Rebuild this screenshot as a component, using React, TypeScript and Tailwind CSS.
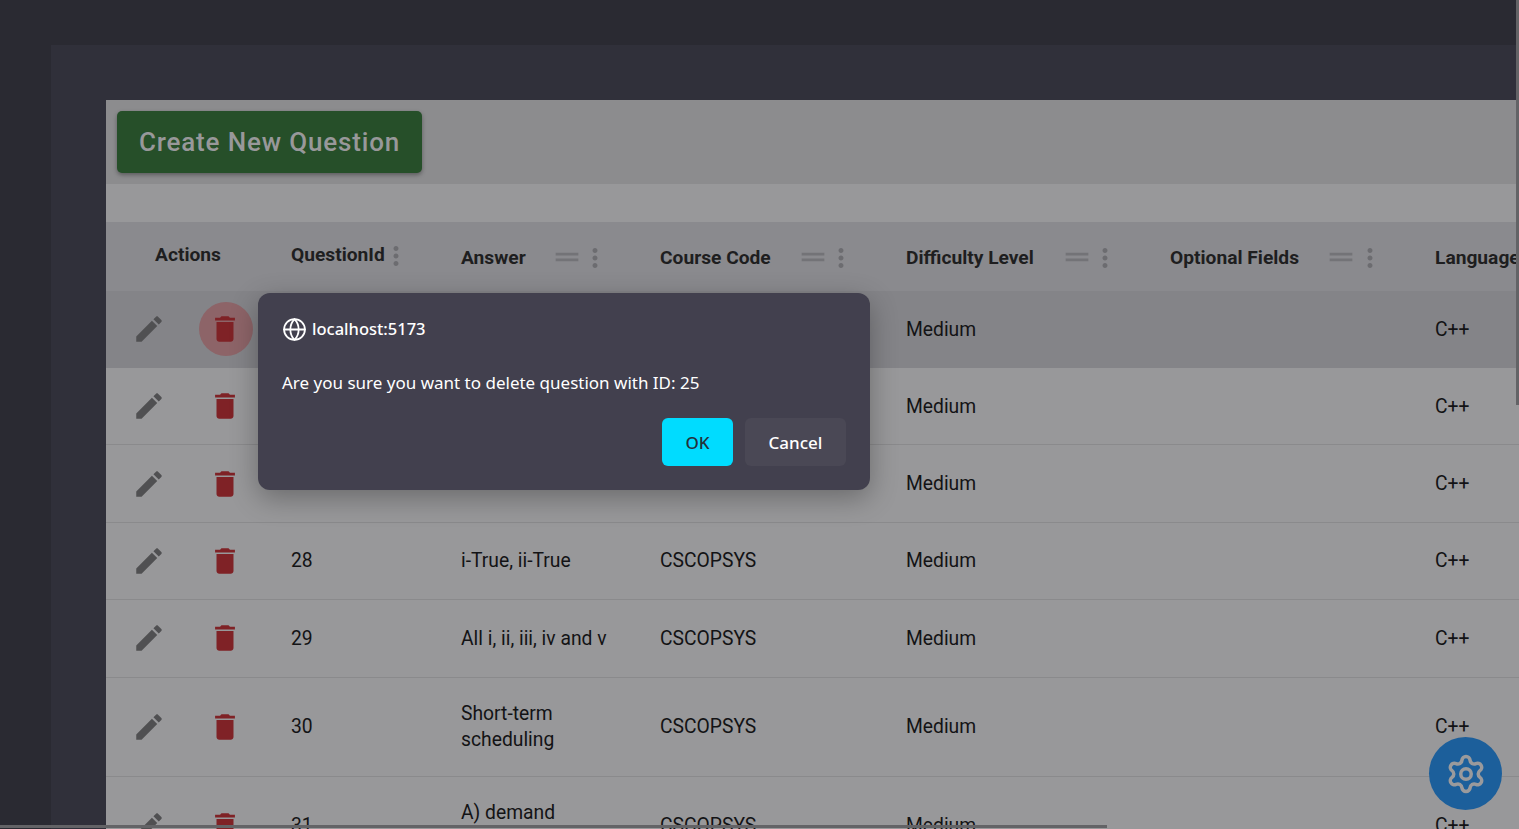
import React from "react";
import { Globe, Settings } from "lucide-react";

const COLS = "grid grid-cols-[185px_170px_199px_246px_264px_265px_200px]";

const ROWS = [
  { id: 25, answer: [], h: "h-[77.4px]", hover: true },
  { id: 26, answer: [], h: "h-[77.4px]" },
  { id: 27, answer: [], h: "h-[77.4px]" },
  { id: 28, answer: ["i-True, ii-True"], h: "h-[77.4px]" },
  { id: 29, answer: ["All i, ii, iii, iv and v"], h: "h-[77.4px]" },
  { id: 30, answer: ["Short-term", "scheduling"], h: "h-[99px]" },
  { id: 31, answer: ["A) demand", "paging"], h: "h-[99px]" },
];

function EditIcon() {
  return (
    <svg viewBox="0 0 24 24" className="w-[34px] h-[34px] fill-[#505052]">
      <path d="M3 17.25V21h3.75L17.81 9.94l-3.75-3.75L3 17.25zM20.71 7.04c.39-.39.39-1.02 0-1.41l-2.34-2.34c-.39-.39-1.02-.39-1.41 0l-1.83 1.83 3.75 3.75 1.83-1.83z" />
    </svg>
  );
}

function TrashIcon() {
  return (
    <svg viewBox="0 0 24 24" className="w-[34px] h-[34px] fill-[#7f2226]">
      <path d="M6 19c0 1.1.9 2 2 2h8c1.1 0 2-.9 2-2V7H6v12zM19 4h-3.5l-1-1h-5l-1 1H5v2h14V4z" />
    </svg>
  );
}

function Kebab() {
  return (
    <svg viewBox="0 0 24 24" className="w-[30px] h-[30px] shrink-0 fill-[#6c6c70]">
      <path d="M12 8c1.1 0 2-.9 2-2s-.9-2-2-2-2 .9-2 2 .9 2 2 2zm0 2c-1.1 0-2 .9-2 2s.9 2 2 2 2-.9 2-2-.9-2-2-2zm0 6c-1.1 0-2 .9-2 2s.9 2 2 2 2-.9 2-2-.9-2-2-2z" />
    </svg>
  );
}

function Handle() {
  return (
    <svg viewBox="0 0 24 24" className="w-[34px] h-[34px] shrink-0 fill-[#737377]">
      <path d="M20 9H4v2h16V9zM4 15h16v-2H4v2z" />
    </svg>
  );
}

function HeaderCell({ label, handleAt, kebabAt }: { label: string; handleAt: string; kebabAt: string }) {
  return (
    <div className="relative flex items-center pt-[5px]">
      <span className="text-[19.2px] font-bold whitespace-nowrap text-[#1e1e20]">{label}</span>
      <span className={`absolute top-[18px] ${handleAt}`}><Handle /></span>
      <span className={`absolute top-[21px] ${kebabAt}`}><Kebab /></span>
    </div>
  );
}

export default function App() {
  return (
    <div className="relative w-[1519px] h-[829px] overflow-hidden bg-[#2a2a32] font-['Roboto',sans-serif] pl-[51px] pt-[45px]">
      <div className="h-full bg-[#30303a] pl-[55px] pt-[55px]">
        <div className="h-full bg-[#98989a]">
          {/* toolbar */}
          <div className="h-[84px] bg-[#8c8c8e] pl-[11px] pt-[11px]">
            <button className="w-[305px] h-[62px] rounded-[5px] bg-[#264f29] text-[26px] pt-[1px] font-medium tracking-[0.84px] text-[#98989a] shadow-[0_2px_4px_rgba(0,0,0,0.35)]">
              Create New Question
            </button>
          </div>
          <div className="h-[38px]" />

          {/* table head */}
          <div className={`${COLS} h-[68.6px] bg-[#8a8a8e]`}>
            <div className="flex items-center pl-[49px] pb-[1px] text-[19.2px] font-bold text-[#1e1e20]">Actions</div>
            <div className="flex items-center pb-[1px] text-[19.2px] font-bold text-[#1e1e20]">
              QuestionId
              <span className="-ml-[4px]"><Kebab /></span>
            </div>
            <HeaderCell label="Answer" handleAt="left-[89px]" kebabAt="left-[119px]" />
            <HeaderCell label="Course Code" handleAt="left-[136px]" kebabAt="left-[166px]" />
            <HeaderCell label="Difficulty Level" handleAt="left-[154px]" kebabAt="left-[184px]" />
            <HeaderCell label="Optional Fields" handleAt="left-[154px]" kebabAt="left-[185px]" />
            <HeaderCell label="Language" handleAt="left-[154px]" kebabAt="left-[184px]" />
          </div>

          {/* rows */}
          {ROWS.map((r) => (
            <div
              key={r.id}
              className={`${COLS} ${r.h} items-center pt-[1px] text-[19.3px] leading-[26px] text-[#131315] ${
                r.hover ? "bg-[#848488]" : "border-b border-[#8a8a8c]"
              }`}
            >
              <div className="relative flex items-center -mt-[1px]">
                <span className="ml-[26px]"><EditIcon /></span>
                {r.hover && <span className="absolute left-[93px] top-1/2 -translate-y-1/2 w-[54px] h-[54px] rounded-full bg-[#8d6468]" />}
                <span className="relative ml-[42px]"><TrashIcon /></span>
              </div>
              <div>{r.id}</div>
              <div>
                {r.answer.map((line) => (
                  <div key={line} className="whitespace-nowrap">{line}</div>
                ))}
              </div>
              <div>CSCOPSYS</div>
              <div>Medium</div>
              <div />
              <div>C++</div>
            </div>
          ))}
        </div>
      </div>

      {/* confirm dialog */}
      <div className="absolute left-[258px] top-[293px] w-[612px] h-[197px] rounded-[12px] bg-[#42404e] px-[24px] pt-[24px] font-['Noto_Sans',sans-serif] text-white shadow-[0_8px_28px_rgba(0,0,0,0.3)]">
        <div className="flex items-center gap-[5px] text-[16.5px] font-medium leading-[24px]">
          <Globe className="w-[25px] h-[25px]" strokeWidth={1.7} />
          <span className="-mt-[1px]">localhost:5173</span>
        </div>
        <p className="mt-[29px] text-[17px] leading-[24px]">Are you sure you want to delete question with ID: 25</p>
        <div className="mt-[23px] flex justify-end gap-[12px]">
          <button className="w-[71px] h-[48px] rounded-[6px] bg-[#00dcff] pt-[1px] text-[17px] font-medium text-[#23303a]">OK</button>
          <button className="w-[101px] h-[48px] rounded-[6px] bg-[#4a4855] pt-[1px] text-[17px] font-medium text-white">Cancel</button>
        </div>
      </div>

      {/* settings fab */}
      <button className="absolute left-[1429px] top-[737px] w-[73px] h-[73px] rounded-full bg-[#1c5f9b] flex items-center justify-center">
        <Settings className="w-[42px] h-[42px] text-[#9a9a9c]" strokeWidth={2} />
      </button>

      {/* scrollbars */}
      <div className="absolute right-0 top-0 w-[3px] h-[405px] bg-[#636366]" />
      <div className="absolute left-0 top-[825px] w-[1107px] h-[3px] bg-[#636366]" />
    </div>
  );
}
